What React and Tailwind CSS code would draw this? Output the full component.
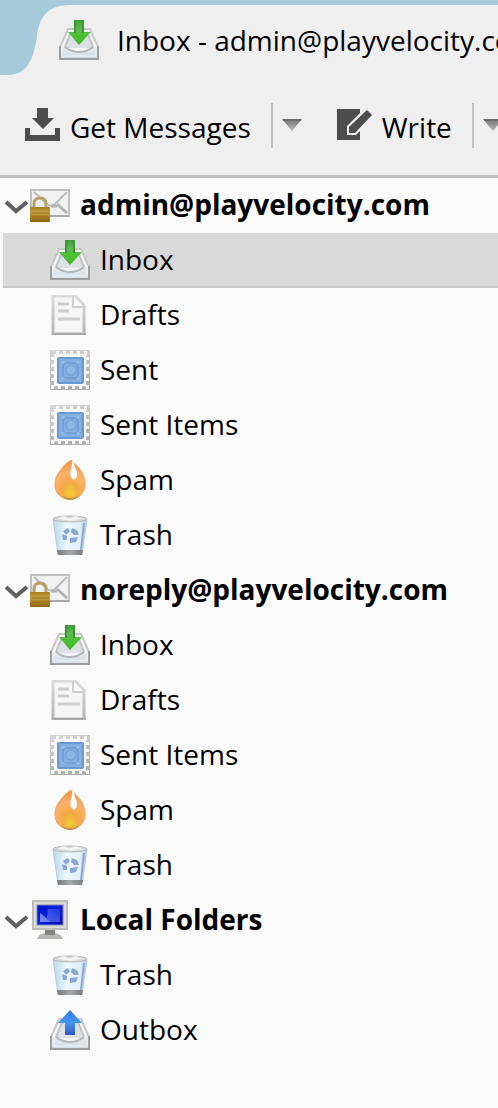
import React, { useState } from "react";

const IconDefs = () => (
  <svg className="absolute size-0" aria-hidden="true">
    <defs>
      <linearGradient id="green" x1="0" y1="0" x2="0" y2="1">
        <stop offset="0" stopColor="#3a9c34" />
        <stop offset="0.35" stopColor="#62b85a" />
        <stop offset="0.6" stopColor="#4dc034" />
        <stop offset="1" stopColor="#3fb527" />
      </linearGradient>
      <linearGradient id="blue" x1="0" y1="0" x2="0" y2="1">
        <stop offset="0" stopColor="#2f7be0" />
        <stop offset="0.5" stopColor="#4595f0" />
        <stop offset="1" stopColor="#3358c4" />
      </linearGradient>
      <linearGradient id="tray" x1="0" y1="0" x2="0" y2="1">
        <stop offset="0" stopColor="#e6eaee" />
        <stop offset="1" stopColor="#d3dee8" />
      </linearGradient>
      <linearGradient id="page" x1="0" y1="0" x2="0" y2="1">
        <stop offset="0" stopColor="#dadada" />
        <stop offset="1" stopColor="#b4b4b4" />
      </linearGradient>
      <linearGradient id="stamp" x1="0" y1="0" x2="0.3" y2="1">
        <stop offset="0" stopColor="#d8d8d8" />
        <stop offset="1" stopColor="#b0b0b0" />
      </linearGradient>
      <radialGradient id="flame" cx="0.5" cy="0.85" r="0.75">
        <stop offset="0" stopColor="#efd032" />
        <stop offset="0.35" stopColor="#f3a945" />
        <stop offset="0.75" stopColor="#f8b26c" />
        <stop offset="1" stopColor="#f5964a" />
      </radialGradient>
      <linearGradient id="bin" x1="0" y1="0" x2="1" y2="0">
        <stop offset="0" stopColor="#b5d6ea" />
        <stop offset="0.4" stopColor="#eef7fa" />
        <stop offset="0.8" stopColor="#e2eff8" />
        <stop offset="1" stopColor="#a8c2e2" />
      </linearGradient>
      <linearGradient id="binBase" x1="0" y1="0" x2="1" y2="0">
        <stop offset="0" stopColor="#777c80" />
        <stop offset="0.5" stopColor="#a3a8ab" />
        <stop offset="1" stopColor="#777c80" />
      </linearGradient>
      <linearGradient id="gold" x1="0" y1="0" x2="0" y2="1">
        <stop offset="0" stopColor="#a87c20" />
        <stop offset="0.4" stopColor="#c9a44c" />
        <stop offset="0.6" stopColor="#b18629" />
        <stop offset="1" stopColor="#8a6212" />
      </linearGradient>
      <linearGradient id="screen" x1="0" y1="0" x2="1" y2="1">
        <stop offset="0" stopColor="#0013c4" />
        <stop offset="0.5" stopColor="#0a1fe0" />
        <stop offset="1" stopColor="#0006a0" />
      </linearGradient>
      <linearGradient id="shine" x1="1" y1="0" x2="0" y2="1">
        <stop offset="0" stopColor="#2a4af0" />
        <stop offset="1" stopColor="#8ea2f2" />
      </linearGradient>
      <linearGradient id="arrow" x1="0" y1="0" x2="0" y2="1">
        <stop offset="0" stopColor="#777777" />
        <stop offset="1" stopColor="#b5b5b5" />
      </linearGradient>
    </defs>
  </svg>
);

const Tray = () => (
  <>
    <path d="M9 9H31L39 27V39H1V27Z" fill="#f6f6f6" stroke="#c6c6c6" strokeWidth="2" />
    <path d="M12 12H28L34 28H6Z" fill="#dde1e6" />
    <path d="M6 27L12 12M34 27L28 12" stroke="#bfc1c4" strokeWidth="2" fill="none" />
    <path d="M2 27H6Q11 33 20 33Q29 33 34 27H38V38H2Z" fill="url(#tray)" />
    <path d="M6 27Q12 32 20 32Q28 32 34 27" stroke="#b4b7ba" strokeWidth="2" fill="none" />
    <path d="M3 26V36H37V26" stroke="#f0f3f6" strokeWidth="1" fill="none" />
    <path d="M1 26V39H39V26" stroke="#9c9ea0" strokeWidth="2" fill="none" />
  </>
);

const InboxIcon = () => (
  <svg viewBox="0 0 40 40" className="size-10 shrink-0" aria-hidden="true">
    <Tray />
    <path d="M15 0H25V12H32L20 25L9 12H15Z" fill="url(#green)" />
    <path d="M16 0V13M24 0V13" stroke="#389830" strokeWidth="2" />
  </svg>
);

const OutboxIcon = () => (
  <svg viewBox="0 0 40 40" className="size-10 shrink-0" aria-hidden="true">
    <Tray />
    <path d="M20 0L32 13H25V25H15V13H8Z" fill="url(#blue)" />
  </svg>
);

const DraftsIcon = () => (
  <svg viewBox="0 0 40 40" className="size-10 shrink-0" aria-hidden="true">
    <path d="M3 1H25L34 10V39H3Z" fill="#f5f5f5" stroke="url(#page)" strokeWidth="3" />
    <path d="M23 1V12H34" fill="#fafafa" stroke="#cfcfcf" strokeWidth="2" />
    <path d="M8 9H19M8 16H19M8 24H30" stroke="#cdcdcd" strokeWidth="3" />
    <path d="M2 39H36" stroke="#a8a8a8" strokeWidth="2" />
  </svg>
);

const SentIcon = () => (
  <svg viewBox="0 0 40 40" className="size-10 shrink-0" aria-hidden="true">
    <rect width="40" height="40" fill="url(#stamp)" />
    <rect x="4" y="4" width="32" height="32" fill="#f8f8f8" />
    <path
      d="M3 3H37V37H3Z"
      fill="none"
      stroke="#f5f5f5"
      strokeWidth="4"
      strokeDasharray="3 4"
      strokeDashoffset="-3"
    />
    <rect x="8" y="8" width="25" height="25" rx="1" fill="#82afe0" stroke="#6798d2" strokeWidth="2" />
    <path d="M12 12L17 14M29 12L24 14M12 29L16 26M29 29L25 26" stroke="#9fc1e8" strokeWidth="2" />
    <rect x="13" y="13" width="15" height="15" rx="4" fill="none" stroke="#739fd8" strokeWidth="2" />
    <circle cx="21" cy="20" r="5" fill="#8ab5e4" stroke="#759fd8" strokeWidth="1" />
  </svg>
);

const SpamIcon = () => (
  <svg viewBox="0 0 40 40" className="size-10 shrink-0" aria-hidden="true">
    <path
      d="M22 0C23 6 19 12 21 17C23 21 27 20 27 14C27 9 24 7 24 3C31 9 35 16 35 24C35 33 29 39 20 39C11 39 5 33 5 25C5 16 9 12 13 7C16 3 19 1 22 0Z"
      fill="url(#flame)"
      stroke="#f0a45c"
      strokeWidth="1"
    />
    <path d="M22 0C23 6 19 12 21 17C23 21 27 20 27 14C27 9 24 7 24 3Z" fill="#ffffff" />
    <path d="M11 36Q20 40 29 36Q25 40 20 40Q15 40 11 36Z" fill="#c08f45" />
  </svg>
);

const TrashIcon = () => (
  <svg viewBox="0 0 40 40" className="size-10 shrink-0" aria-hidden="true">
    <path d="M3 4L8 39H32L37 4Z" fill="url(#bin)" stroke="#b4cbe0" strokeWidth="1" />
    <path d="M34 8L31 35" stroke="#8ba9d6" strokeWidth="2" />
    <path d="M7 35H33L32 40H8Z" fill="url(#binBase)" />
    <ellipse cx="20" cy="4" rx="17" ry="3" fill="#d3d7da" stroke="#b5babd" strokeWidth="1" />
    <path d="M7 4L13 1L19 3L26 1L33 4L20 6Z" fill="#f6f6f6" stroke="#dddddd" strokeWidth="1" />
    <g fill="#86a9da">
      <path d="M13 16L18 13L20 16L16 20Z" />
      <path d="M22 13L27 15L29 20L24 20L21 17Z" />
      <path d="M12 19L17 21L17 25L13 25Z" />
      <path d="M20 23L28 22L26 27L20 28Z" />
    </g>
  </svg>
);

const AccountIcon = () => (
  <svg viewBox="0 0 40 40" className="size-10 shrink-0" aria-hidden="true">
    <rect x="1" y="5" width="38" height="26" fill="#f1f1f1" stroke="#c0c0c0" strokeWidth="2" />
    <path d="M4 7L17 19Q21 22 25 19L37 7" fill="none" stroke="#bdbdbd" strokeWidth="2" />
    <path d="M27 19L37 28M21 21H27" fill="none" stroke="#b2b2b2" strokeWidth="3" />
    <path d="M2 31H39" stroke="#a8a8a8" strokeWidth="2" />
    <path d="M4 24V19Q4 13 10 13Q16 13 16 19V24" fill="none" stroke="#b8a06a" strokeWidth="3" />
    <rect x="0" y="22" width="20" height="15" rx="1" fill="url(#gold)" />
    <path d="M1 28H19M1 32H19" stroke="#987020" strokeWidth="1" />
  </svg>
);

const ComputerIcon = () => (
  <svg viewBox="0 0 40 40" className="size-10 shrink-0" aria-hidden="true">
    <path d="M8 37Q9 34 16 33H24Q31 34 32 37L33 39H7Z" fill="#b4b4b0" />
    <rect x="15" y="29" width="10" height="6" fill="#85857f" />
    <rect x="3" y="1" width="34" height="28" fill="#dadad6" stroke="#bdbdb8" strokeWidth="2" />
    <rect x="7" y="5" width="26" height="20" fill="url(#screen)" stroke="#7c88bc" strokeWidth="1" />
    <path d="M18 9H30V22H10V13L17 18Z" fill="url(#shine)" opacity="0.6" />
    <path d="M10 13L20 22H10Z" fill="#8da4f5" opacity="0.5" />
  </svg>
);

const DownArrow = () => (
  <svg viewBox="0 0 20 12" className="h-3 w-5" aria-hidden="true">
    <path d="M0 0H20L10 12Z" fill="url(#arrow)" />
    <path d="M1 1H19" stroke="#6c6c6c" strokeWidth="2" />
  </svg>
);

const accounts = [
  {
    name: "admin@playvelocity.com",
    icon: AccountIcon,
    folders: [
      ["Inbox", InboxIcon],
      ["Drafts", DraftsIcon],
      ["Sent", SentIcon],
      ["Sent Items", SentIcon],
      ["Spam", SpamIcon],
      ["Trash", TrashIcon],
    ],
  },
  {
    name: "noreply@playvelocity.com",
    icon: AccountIcon,
    folders: [
      ["Inbox", InboxIcon],
      ["Drafts", DraftsIcon],
      ["Sent Items", SentIcon],
      ["Spam", SpamIcon],
      ["Trash", TrashIcon],
    ],
  },
  {
    name: "Local Folders",
    icon: ComputerIcon,
    folders: [
      ["Trash", TrashIcon],
      ["Outbox", OutboxIcon],
    ],
  },
];

const Account = ({ account, selected, onSelect }) => {
  const [open, setOpen] = useState(true);
  const Icon = account.icon;

  return (
    <li>
      <button
        className="flex h-[55px] w-full items-center border-b-2 border-transparent pl-1 text-left font-bold"
        aria-expanded={open}
        onClick={() => setOpen(!open)}
      >
        <svg viewBox="0 0 26 20" className="h-5 w-[26px] shrink-0" aria-hidden="true">
          <path
            d="M2 7L12 16L23 7"
            fill="none"
            stroke="#606060"
            strokeWidth="4"
            transform={open ? undefined : "rotate(-90 13 10)"}
          />
        </svg>
        <Icon />
        <span className="ml-2.5 pb-0.5">{account.name}</span>
      </button>
      {open && (
        <ul>
          {account.folders.map(([label, FolderIcon]) => {
            const id = `${account.name}/${label}`;
            return (
              <li key={id} className="pl-[3px]">
                <button
                  className={`flex h-[55px] w-full items-center gap-2.5 border-b-2 pl-[47px] text-left ${
                    selected === id
                      ? "border-[#c9c9c9] bg-[#d9d9d9]"
                      : "border-transparent"
                  }`}
                  onClick={() => onSelect(id)}
                >
                  <FolderIcon />
                  <span className="pb-0.5">{label}</span>
                </button>
              </li>
            );
          })}
        </ul>
      )}
    </li>
  );
};

const App = () => {
  const [selected, setSelected] = useState("admin@playvelocity.com/Inbox");

  return (
    <div className="min-h-screen overflow-hidden bg-[#fafafa] font-['Open_Sans','Noto_Sans',sans-serif] text-[28px] leading-10 whitespace-nowrap text-black">
      <IconDefs />
      <header className="border-b-3 border-[#c0c0c0] bg-[#efefef]">
        <div className="flex h-[75px] border-t-5 border-[#a6c9db]">
          <svg viewBox="0 0 59 70" className="h-[70px] w-[59px] shrink-0 overflow-visible" aria-hidden="true">
            <path d="M0 0H70C46 0 39 14 37 31C34 55 26 70 8 70H0Z" fill="#a6c9db" />
          </svg>
          <div className="flex h-[70px] items-center gap-[18px]">
            <InboxIcon />
            <h1>Inbox - admin@playvelocity.com</h1>
          </div>
        </div>
        <div className="flex h-[100px] items-center">
          <button className="flex items-center gap-2.5 pl-[25px]">
            <svg viewBox="0 0 35 34" className="h-[34px] w-[35px]" fill="#4d4d4d" aria-hidden="true">
              <path d="M12 0H23V10H29L18 21L7 10H12Z" />
              <path d="M0 20H5V27H30V20H35V33H0Z" />
            </svg>
            <span className="pt-1">Get Messages</span>
          </button>
          <button className="ml-5 flex h-[45px] items-center border-l-2 border-[#c0c0c0] pl-[9px]" aria-label="Get messages options">
            <DownArrow />
          </button>
          <button className="ml-[35px] flex items-center gap-2.5">
            <svg viewBox="0 0 35 32" className="h-8 w-[35px]" fill="#4d4d4d" aria-hidden="true">
              <path d="M0 0H23V4L10 17V26H19L23 22V31H0Z" />
              <path d="M30 1L35 6L18 24H12V18Z" />
            </svg>
            <span className="pt-1">Write</span>
          </button>
          <button className="ml-5 flex h-[45px] items-center border-l-2 border-[#c0c0c0] pl-[9px]" aria-label="Write options">
            <DownArrow />
          </button>
        </div>
      </header>
      <nav aria-label="Folders">
        <ul>
          {accounts.map((account) => (
            <Account
              key={account.name}
              account={account}
              selected={selected}
              onSelect={setSelected}
            />
          ))}
        </ul>
      </nav>
    </div>
  );
};

export default App;
